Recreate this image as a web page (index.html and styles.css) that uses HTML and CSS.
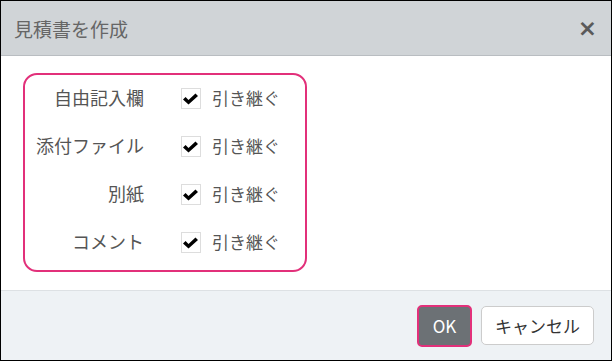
FILE: index.html
```html
<!DOCTYPE html>
<html lang="ja">
<head>
    <meta charset="UTF-8">
    <title>見積書を作成</title>
    <link rel="stylesheet" href="styles.css">
</head>
<body>
    <div class="modal">
        <div class="modal-header">
            <h2 class="modal-title">見積書を作成</h2>
            <span class="close">&times;</span>
        </div>
        <div class="modal-body">
            <div class="inherit-box">
                <div class="row">
                    <span class="label">自由記入欄</span>
                    <span class="check"><svg viewBox="0 0 18 19"><path d="M1 10.5 L3.6 8 L6.5 11 L13.5 4.5 L16 7 L6.5 15.5 Z" /></svg></span>
                    <span class="text">引き継ぐ</span>
                </div>
                <div class="row">
                    <span class="label">添付ファイル</span>
                    <span class="check"><svg viewBox="0 0 18 19"><path d="M1 10.5 L3.6 8 L6.5 11 L13.5 4.5 L16 7 L6.5 15.5 Z" /></svg></span>
                    <span class="text">引き継ぐ</span>
                </div>
                <div class="row">
                    <span class="label">別紙</span>
                    <span class="check"><svg viewBox="0 0 18 19"><path d="M1 10.5 L3.6 8 L6.5 11 L13.5 4.5 L16 7 L6.5 15.5 Z" /></svg></span>
                    <span class="text">引き継ぐ</span>
                </div>
                <div class="row">
                    <span class="label">コメント</span>
                    <span class="check"><svg viewBox="0 0 18 19"><path d="M1 10.5 L3.6 8 L6.5 11 L13.5 4.5 L16 7 L6.5 15.5 Z" /></svg></span>
                    <span class="text">引き継ぐ</span>
                </div>
            </div>
        </div>
        <div class="modal-footer">
            <button class="btn btn-ok">OK</button>
            <button class="btn btn-cancel">キャンセル</button>
        </div>
    </div>
</body>
</html>
```

FILE: styles.css
```css
* {
    box-sizing: border-box;
}

body {
    margin: 0;
    font-family: "Noto Sans CJK JP", "Noto Sans", sans-serif;
    background-color: #fff;
}

.modal {
    width: 612px;
    height: 361px;
    border: 1px solid #000;
    display: flex;
    flex-direction: column;
}

.modal-header {
    height: 55px;
    background-color: #d0d4d7;
    border-bottom: 1px solid #b9bdc1;
    display: flex;
    align-items: center;
    justify-content: space-between;
    padding: 0 14px 0 13px;
}

.modal-title {
    margin: 0;
    font-size: 19px;
    font-weight: normal;
    color: #666;
}

.close {
    font-family: "DejaVu Sans", sans-serif;
    font-size: 23px;
    font-weight: bold;
    color: #5a5a5a;
    line-height: 1;
}

.modal-body {
    flex: 1;
    padding: 17px 22px 0;
}

.inherit-box {
    display: inline-grid;
    grid-template-columns: auto auto auto;
    grid-auto-rows: 44px;
    row-gap: 4px;
    align-items: center;
    border: 2px solid #e2307a;
    border-radius: 14px;
    padding: 0 25px 7px 11px;
}

.row {
    display: contents;
}

.label {
    text-align: right;
    font-size: 18px;
    color: #555;
    padding-right: 37px;
}

.check {
    width: 20px;
    height: 21px;
    margin-top: 3px;
    border: 1px solid #ddd;
    background-color: #fff;
    display: block;
}

.check svg {
    display: block;
    width: 18px;
    height: 19px;
    fill: #000;
}

.text {
    font-size: 17px;
    color: #555;
    padding-left: 11px;
}

.modal-footer {
    height: 70px;
    background-color: #eef2f5;
    border-top: 1px solid #dde1e4;
    display: flex;
    justify-content: flex-end;
    align-items: center;
    gap: 9px;
    padding-right: 17px;
}

.btn {
    font-family: "Noto Sans CJK JP", "Noto Sans", sans-serif;
    font-size: 17px;
    border-radius: 5px;
    cursor: pointer;
}

.btn-ok {
    width: 55px;
    height: 42px;
    background-color: #6c7175;
    color: #fff;
    border: 2px solid #e2307a;
}

.btn-cancel {
    width: 113px;
    height: 39px;
    background-color: #fff;
    color: #333;
    border: 1px solid #ccc;
}
```
